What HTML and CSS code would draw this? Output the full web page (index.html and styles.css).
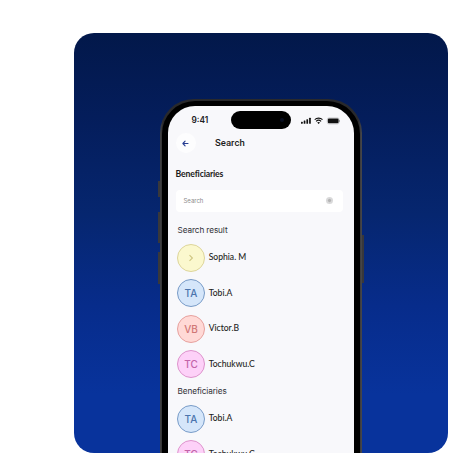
FILE: index.html
```html
<!DOCTYPE html>
<html lang="en">
<head>
<meta charset="utf-8">
<title>Search beneficiaries</title>
<link rel="stylesheet" href="styles.css">
</head>
<body>
<main class="card">
  <div class="phone">
    <i class="key key-action"></i><i class="key key-up"></i><i class="key key-down"></i><i class="key key-power"></i>
    <div class="bezel">
      <div class="screen">
        <div class="status">
          <span class="time">9:41</span>
          <span class="island"><i class="lens"></i></span>
          <svg class="indicators" width="39" height="8" viewBox="0 0 39 8">
            <g fill="#111">
              <rect x="0" y="4.7" width="1.7" height="2" rx=".5"/>
              <rect x="2.7" y="3.6" width="1.7" height="3.1" rx=".5"/>
              <rect x="5.4" y="2.2" width="1.7" height="4.5" rx=".5"/>
              <rect x="8.1" y=".8" width="1.7" height="5.9" rx=".5"/>
              <path d="M16.2 5.6a2 2 0 0 1 2.8 0L17.6 7.1z"/>
              <rect x="26.8" y="1.5" width="10.8" height="4.8" rx="1.2"/>
              <rect x="38.2" y="3" width=".7" height="1.9" rx=".3" opacity=".5"/>
            </g>
            <g fill="none" stroke="#111" stroke-width="1.1">
              <path d="M13.7 2.7a5.6 5.6 0 0 1 7.8 0M15.1 4.3a3.6 3.6 0 0 1 5 0"/>
            </g>
            <rect x="26.2" y=".8" width="12" height="6.2" rx="1.9" fill="none" stroke="#111" stroke-width=".4" opacity=".4"/>
          </svg>
        </div>
        <header class="bar">
          <span class="back">
            <svg width="7" height="7" viewBox="0 0 7 7" fill="none" stroke="#263c91" stroke-width="1.1" stroke-linecap="round" stroke-linejoin="round"><path d="M6 3.5H1M3.1 1.2L.9 3.5 3.1 5.8"/></svg>
          </span>
          <h1 class="title">Search</h1>
        </header>
        <h2 class="heading">Beneficiaries</h2>
        <div class="field"><span class="hint">Search</span><i class="clear"></i></div>
        <h3 class="label">Search result</h3>
        <ul class="list">
          <li class="row"><span class="avatar yellow"><svg width="6" height="8" viewBox="0 0 6 8" fill="none" stroke="#cec580" stroke-width="1.1"><path d="M1.5 1.2L4.4 4 1.5 6.8"/></svg></span><span class="name">Sophia. M</span></li>
          <li class="row"><span class="avatar blue">TA</span><span class="name">Tobi.A</span></li>
          <li class="row"><span class="avatar red">VB</span><span class="name">Victor.B</span></li>
          <li class="row"><span class="avatar pink">TC</span><span class="name">Tochukwu.C</span></li>
        </ul>
        <h3 class="label second">Beneficiaries</h3>
        <ul class="list">
          <li class="row"><span class="avatar blue">TA</span><span class="name">Tobi.A</span></li>
          <li class="row"><span class="avatar pink">TC</span><span class="name">Tochukwu.C</span></li>
        </ul>
      </div>
    </div>
  </div>
</main>
</body>
</html>
```

FILE: styles.css
```css
* { box-sizing: border-box; }
body { margin: 0; background: #fff; font-family: Lato, "Liberation Sans", sans-serif; color: #1c1c20; overflow: hidden; }
h1, h2, h3, ul { margin: 0; padding: 0; }
.card { width: 374px; height: 420.4px; margin: 33px 0 0 74px; padding: 66px 0 0 86px; border-radius: 20px; overflow: hidden; background: linear-gradient(#02184a 0%, #041d5b 20%, #06266f 43%, #072c8b 65%, #08339c 86%, #08339c 100%); }
.phone { position: relative; width: 202px; height: 440px; padding: 1.5px 2px 0 1.5px; border-radius: 34px 34px 0 0; background: linear-gradient(90deg, #454547, #29292b 3px, #29292b 198px, #49494b); }
.bezel { height: 440px; padding: 5px 6px 0 6px; border-radius: 33px 33px 0 0; background: #000; }
.screen { height: 435px; border-radius: 27px 27px 0 0; background: #f8f8fb; overflow: hidden; }
.key { position: absolute; width: 2px; background: #38383b; }
.key-action { left: -2px; top: 82px; height: 16px; }
.key-up { left: -2px; top: 113px; height: 31px; }
.key-down { left: -2px; top: 153px; height: 32px; }
.key-power { right: -1.5px; top: 136px; height: 48px; }
.status { display: flex; align-items: center; height: 29px; padding-left: 24px; }
.time { width: 39.5px; font: 600 8.3px Inter, sans-serif; color: #202024; }
.island { display: flex; align-items: center; justify-content: flex-end; width: 60px; height: 17.5px; padding-right: 7px; border-radius: 9px; background: #000; }
.lens { width: 4px; height: 4px; border-radius: 50%; background: #080d20; }
.indicators { margin: 1px 0 0 10px; }
.bar { display: flex; align-items: center; height: 17px; padding-left: 8px; }
.back { display: flex; align-items: center; justify-content: center; width: 20px; height: 20px; border-radius: 50%; background: #fdfdfe; }
.title { margin-left: 19.5px; font: 500 9.5px/14px Roboto, sans-serif; letter-spacing: .05px; }
.heading { padding-left: 8px; margin-top: 16px; font-size: 8.7px; font-weight: 700; line-height: 12px; letter-spacing: -.16px; }
.field { display: flex; align-items: center; justify-content: space-between; width: 167px; height: 22px; margin: 10px 0 0 8px; padding: 0 9.5px 0 8px; border-radius: 4px; background: #fff; }
.hint { font: 6px/8px Inter, sans-serif; color: #8b8b8d; }
.clear { width: 7px; height: 7px; border-radius: 50%; background: radial-gradient(circle, #b4b4b4 0 1px, #d9d9da 2.2px); }
.label { height: 12px; margin-top: 12px; padding-left: 10px; font: 400 8.2px/12px Inter, sans-serif; letter-spacing: -.09px; color: #303036; }
.list { list-style: none; margin-top: 8px; }
.row { display: flex; align-items: center; height: 28px; margin-bottom: 7.5px; padding-left: 9.5px; }
.avatar { display: flex; align-items: center; justify-content: center; width: 28px; height: 28px; border: .8px solid; border-radius: 50%; font: 500 10px Inter, sans-serif; }
.yellow { background: #fbf8ce; border-color: #ddd59a; }
.blue { background: #d5e6fa; border-color: #789bc7; color: #4b74ad; }
.red { background: #ffd9d6; border-color: #e7a19e; color: #d07776; }
.pink { background: #fdd1f8; border-color: #dd93cc; color: #c263a8; }
.name { margin: -1px 0 0 3.7px; font-size: 8.6px; line-height: 12px; -webkit-text-stroke: .08px #1c1c20; }
.second { margin-top: -.9px; }
```
